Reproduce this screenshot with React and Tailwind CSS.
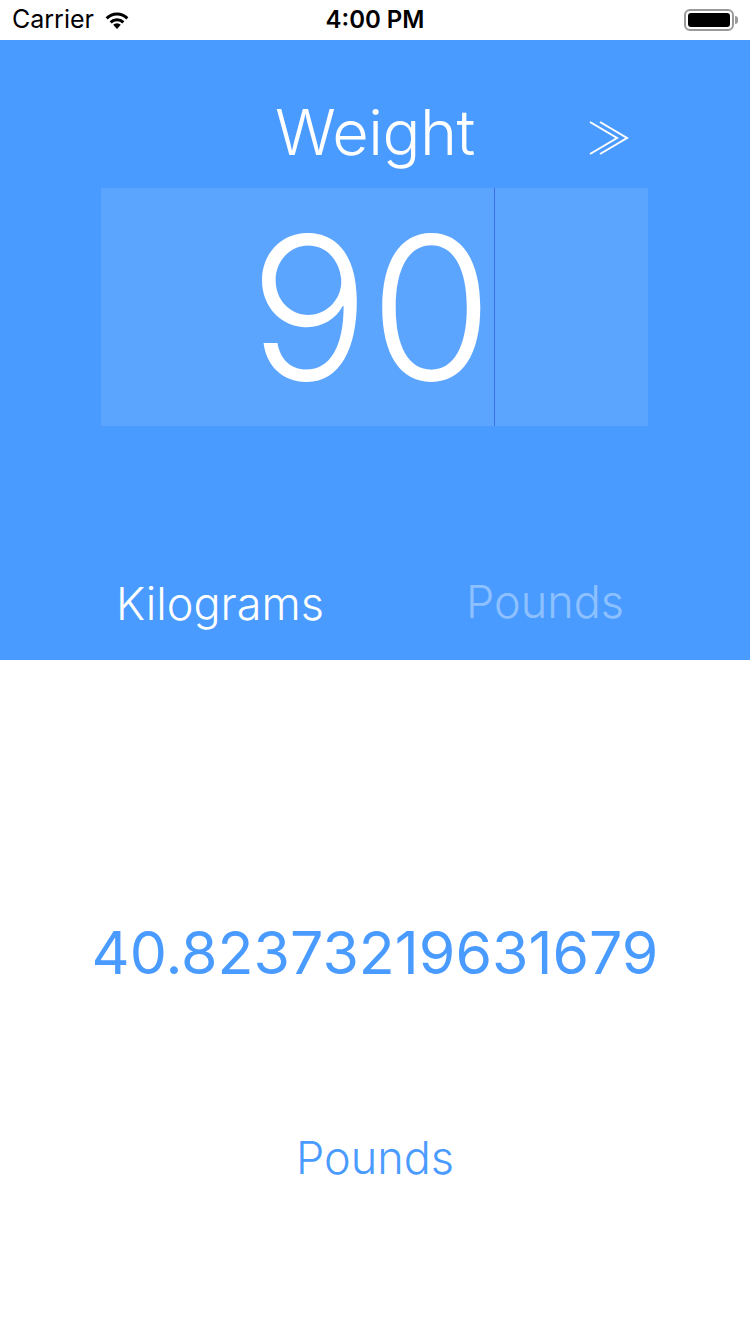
import React from 'react'

function Wifi() {
  return (
    <svg width="26" height="20" viewBox="0 0 26 20">
      <path d="M13 19 L9.2 14.8 A5.5 5.5 0 0 1 16.8 14.8 Z" fill="#000" />
      <path d="M5.6 11.2 A10.6 10.6 0 0 1 20.4 11.2 L18.3 13.5 A7.6 7.6 0 0 0 7.7 13.5 Z" fill="#000" />
      <path d="M1.6 7.2 A16.2 16.2 0 0 1 24.4 7.2 L22.3 9.4 A13.2 13.2 0 0 0 3.7 9.4 Z" fill="#000" />
    </svg>
  )
}

function Battery() {
  return (
    <div className="flex items-center">
      <div className="w-[50px] h-[22px] rounded-[6px] border-2 border-[#9a9a9a] p-[2px]">
        <div className="w-full h-full rounded-[3px] bg-black" />
      </div>
      <div className="w-[3px] h-[8px] rounded-r-sm bg-[#9a9a9a] ml-[1px]" />
    </div>
  )
}

export default function App() {
  return (
    <div className="w-[750px] h-[1334px] bg-white font-['Inter',sans-serif] overflow-hidden">
      {/* status bar */}
      <div className="h-[40px] flex items-center justify-between px-[12px] relative">
        <div className="flex items-center gap-[10px] text-[25px] text-black">
          <span>Carrier</span>
          <Wifi />
        </div>
        <div className="absolute left-0 right-0 text-center text-[24px] font-semibold text-black">4:00 PM</div>
        <div>
          <Battery />
        </div>
      </div>

      {/* converter panel */}
      <div className="h-[620px] bg-[#4a9bff] flex flex-col">
        <div className="h-[148px] relative flex items-end justify-center pb-[24px]">
          <span className="text-[63px] font-light text-white leading-none tracking-[-0.5px]">Weight</span>
          <svg className="absolute left-[589px] top-[80px]" width="40" height="36" viewBox="0 0 40 36">
            <path d="M1 2 L28 18 L1 34" stroke="white" strokeWidth="2" fill="none" />
            <path d="M11 2 L38 18 L11 34" stroke="white" strokeWidth="2" fill="none" />
          </svg>
        </div>
        <div className="ml-[101px] w-[547px] h-[238px] flex bg-[#5ca5fe]">
          <div className="w-[393px] flex items-center justify-end pr-[1px]">
            <span className="text-[200px] font-light text-white leading-none">90</span>
          </div>
          <div className="w-px bg-[#3f6fe6]" />
          <div className="flex-1" />
        </div>
        <div className="flex-1 flex items-end pb-[34px]">
          <div className="w-1/2 pl-[116px] text-[45px] font-light text-white leading-none">Kilograms</div>
          <div className="w-1/2 pl-[91px] text-[45px] font-light text-white/40 leading-none pb-[2px]">Pounds</div>
        </div>
      </div>

      {/* result */}
      <div className="flex flex-col items-center">
        <div className="mt-[263px] text-[59px] text-[#4a9bff] leading-none">40.82373219631679</div>
        <div className="mt-[153px] text-[45px] font-light text-[#4a9bff] leading-none">Pounds</div>
      </div>
    </div>
  )
}
